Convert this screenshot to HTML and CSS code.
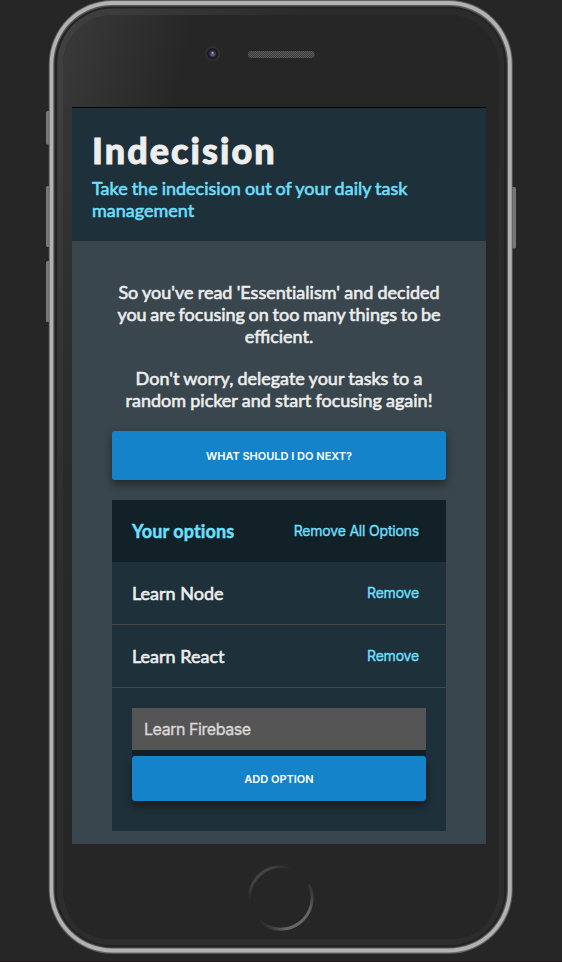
FILE: index.html
```html
<!DOCTYPE html>
<html lang="en">
<head>
<meta charset="utf-8">
<title>Indecision</title>
<link rel="stylesheet" href="styles.css">
</head>
<body>
<div class="phone">
  <svg class="phone-frame" width="562" height="962" viewBox="0 0 562 962" aria-hidden="true">
    <defs>
      <linearGradient id="glare" gradientUnits="userSpaceOnUse" x1="55" y1="15" x2="190" y2="50">
        <stop offset="0" stop-color="#3b3b3b"/><stop offset=".4" stop-color="#333"/><stop offset="1" stop-color="#262626"/>
      </linearGradient>
      <linearGradient id="fade" x1="0" y1="0" x2="0" y2="1">
        <stop offset="0" stop-color="#353535"/><stop offset=".5" stop-color="#292929"/><stop offset="1" stop-color="#262626"/>
      </linearGradient>
      <linearGradient id="edge-fade" gradientUnits="userSpaceOnUse" x1="0" y1="100" x2="0" y2="600">
        <stop offset="0" stop-color="#2d2d2d" stop-opacity="0"/><stop offset="1" stop-color="#2d2d2d"/>
      </linearGradient>
      <linearGradient id="edge" gradientUnits="userSpaceOnUse" x1="57" y1="0" x2="300" y2="40">
        <stop offset="0" stop-color="#414141"/><stop offset="1" stop-color="#2b2b2b"/>
      </linearGradient>
      <linearGradient id="home-top" gradientUnits="userSpaceOnUse" x1="250" y1="902" x2="290" y2="867">
        <stop offset="0" stop-color="#262626"/><stop offset=".25" stop-color="#434343"/><stop offset=".7" stop-color="#434343"/><stop offset="1" stop-color="#262626"/>
      </linearGradient>
      <linearGradient id="home-bottom" gradientUnits="userSpaceOnUse" x1="261" y1="924" x2="312" y2="882">
        <stop offset="0" stop-color="#262626"/><stop offset=".25" stop-color="#686868"/><stop offset=".7" stop-color="#646464"/><stop offset="1" stop-color="#262626"/>
      </linearGradient>
      <pattern id="mesh" width="2" height="2" patternUnits="userSpaceOnUse">
        <rect width="2" height="2" fill="#3a3a3a"/><rect width="1" height="1" fill="#5c5c5c"/><rect x="1" y="1" width="1" height="1" fill="#5c5c5c"/>
      </pattern>
    </defs>
    <g fill="#77777a">
      <rect x="46" y="111" width="5" height="33.500" rx="1.500"/>
      <rect x="46" y="186" width="5" height="61" rx="1.500"/>
      <rect x="46" y="261" width="5" height="61" rx="1.500"/>
      <rect x="511" y="187" width="5" height="61.500" rx="1.500"/>
    </g>
    <rect x="48.800" y="0" width="463.900" height="953.800" rx="64" fill="#626262"/>
    <rect x="49.700" y="1" width="462" height="951.500" rx="63" fill="#b2b2b2"/>
    <rect x="53.300" y="5" width="454.700" height="943.500" rx="59" fill="#555"/>
    <rect x="54.500" y="6.500" width="452.200" height="941" rx="58" fill="#232323"/>
    <rect x="57.300" y="8.500" width="446.700" height="936.500" rx="55" fill="url(#edge)"/>
    <rect x="57.300" y="8.500" width="446.700" height="936.500" rx="55" fill="url(#edge-fade)"/>
    <rect x="63" y="15" width="435.500" height="924" rx="50" fill="#262626"/>
    <rect x="63" y="15" width="435.500" height="924" rx="50" fill="url(#glare)"/>
    <path d="M63 107H72V843H63z" fill="url(#fade)"/>
    <path d="M63 843H498V889Q495 939 448 939H113Q66 939 63 889z" fill="#262626"/>
    <circle cx="212.600" cy="53.500" r="7.500" fill="#303030"/>
    <circle cx="212.600" cy="53.800" r="5.700" fill="#1c1b1f"/>
    <circle cx="212.600" cy="53.800" r="3.500" fill="#3c3253"/>
    <circle cx="212.600" cy="54.300" r="2" fill="#635778"/>
    <circle cx="212.600" cy="52.800" r="1" fill="#aaa2b9"/>
    <rect x="248" y="51" width="66.500" height="7" rx="3" fill="url(#mesh)"/>
    <path d="M249.500 901A31.500 31.500 0 0 1 290 868" fill="none" stroke="url(#home-top)" stroke-width="3"/>
    <path d="M260 921.500A31.500 31.500 0 0 0 309 884" fill="none" stroke="url(#home-bottom)" stroke-width="3"/>
  </svg>
  <main class="screen">
    <header class="header">
      <h1 class="header-title">Indecision</h1>
      <h2 class="header-subtitle">Take the indecision out of your daily task<br>management</h2>
    </header>
    <div class="container">
      <p class="intro">So you've read 'Essentialism' and decided<br><span class="tight">you are focusing on too many things to be</span><br><span class="ligated">efficient.</span></p>
      <p class="intro">Don't worry, delegate your tasks to a<br>random picker and start focusing again!</p>
      <button class="button button-big">WHAT SHOULD I DO NEXT?</button>
      <section class="widget">
        <div class="widget-header">
          <h3 class="widget-title">Your options</h3>
          <button class="button-link link-all">Remove All Options</button>
        </div>
        <div class="option"><p class="option-text">Learn Node</p><button class="button-link">Remove</button></div>
        <div class="option"><p class="option-text">Learn React</p><button class="button-link">Remove</button></div>
        <form class="add-option">
          <input class="add-input" type="text" value="Learn Firebase">
          <button class="button button-add" type="button">ADD OPTION</button>
        </form>
      </section>
    </div>
  </main>
</div>
</body>
</html>
```
FILE: styles.css
```css
* { box-sizing: border-box; }
body { margin: 0; background: #262626; font-family: Lato, sans-serif; font-variant-ligatures: none; overflow: hidden; }
h1, h2, h3, p { margin: 0; }
button, input { font-family: Inter, sans-serif; border: 0; }
.phone { position: relative; width: 562px; height: 962px; padding: 107px 76px 0 72px; border-bottom: 1px solid #1f181b; }
.phone-frame { position: absolute; top: 0; left: 0; }
.screen { position: relative; height: 737px; background: #39464e; border-top: 1px solid #000; overflow: hidden; }
.header { height: 133px; padding: 21px 20px 0; background: #1e3039; }
.header-title { font-size: 36px; line-height: 43px; font-weight: 900; letter-spacing: 2.050px; color: #eee; -webkit-text-stroke: .9px; }
.header-subtitle { margin-top: 5px; font-size: 18px; line-height: 22px; font-weight: 400; word-spacing: -.6px; color: #6bdffb; -webkit-text-stroke: .6px; white-space: nowrap; }
.container { padding: 40px 40px 0; }
.intro { margin-bottom: 20px; font-size: 18px; line-height: 22px; text-align: center; word-spacing: -.4px; color: #ededed; -webkit-text-stroke: .6px; white-space: nowrap; }
.tight { word-spacing: -.95px; }
.ligated { font-variant-ligatures: normal; }
.button { display: block; width: 100%; padding: 0; border-radius: 3px; background: #1583ca; color: #fff; font-size: 11px; font-weight: 600; box-shadow: 0 4px 8px rgba(0,0,0,.45); }
.button-big { height: 49px; margin-bottom: 20px; }
.widget { height: 331px; background: #1e3039; }
.widget-header, .option { display: flex; align-items: center; justify-content: space-between; padding: 0 27px 0 20px; }
.widget-header { height: 62px; background: #122027; }
.widget-title { font-size: 18px; line-height: 22px; font-weight: 700; letter-spacing: .1px; color: #6bdffb; -webkit-text-stroke: .5px; }
.option { height: 63px; border-bottom: 1px solid #464646; }
.option-text { font-size: 18px; line-height: 22px; color: #ededed; -webkit-text-stroke: .6px; }
.button-link { padding: 0 0 1px; background: none; color: #6bdffb; font-size: 14px; font-weight: 400; letter-spacing: -.19px; -webkit-text-stroke: .4px; }
.add-option { margin: 20px 20px 0; background: #122027; display: flex; flex-direction: column; gap: 6px; }
.add-input { width: 100%; height: 42px; padding: 0 12px; background: #555; color: #d8d8d8; font-size: 16px; letter-spacing: -.45px; border-radius: 0; -webkit-text-stroke: .35px; }
.button-add { height: 45px; box-shadow: 0 5px 8px rgba(0,0,0,.4); }
```
